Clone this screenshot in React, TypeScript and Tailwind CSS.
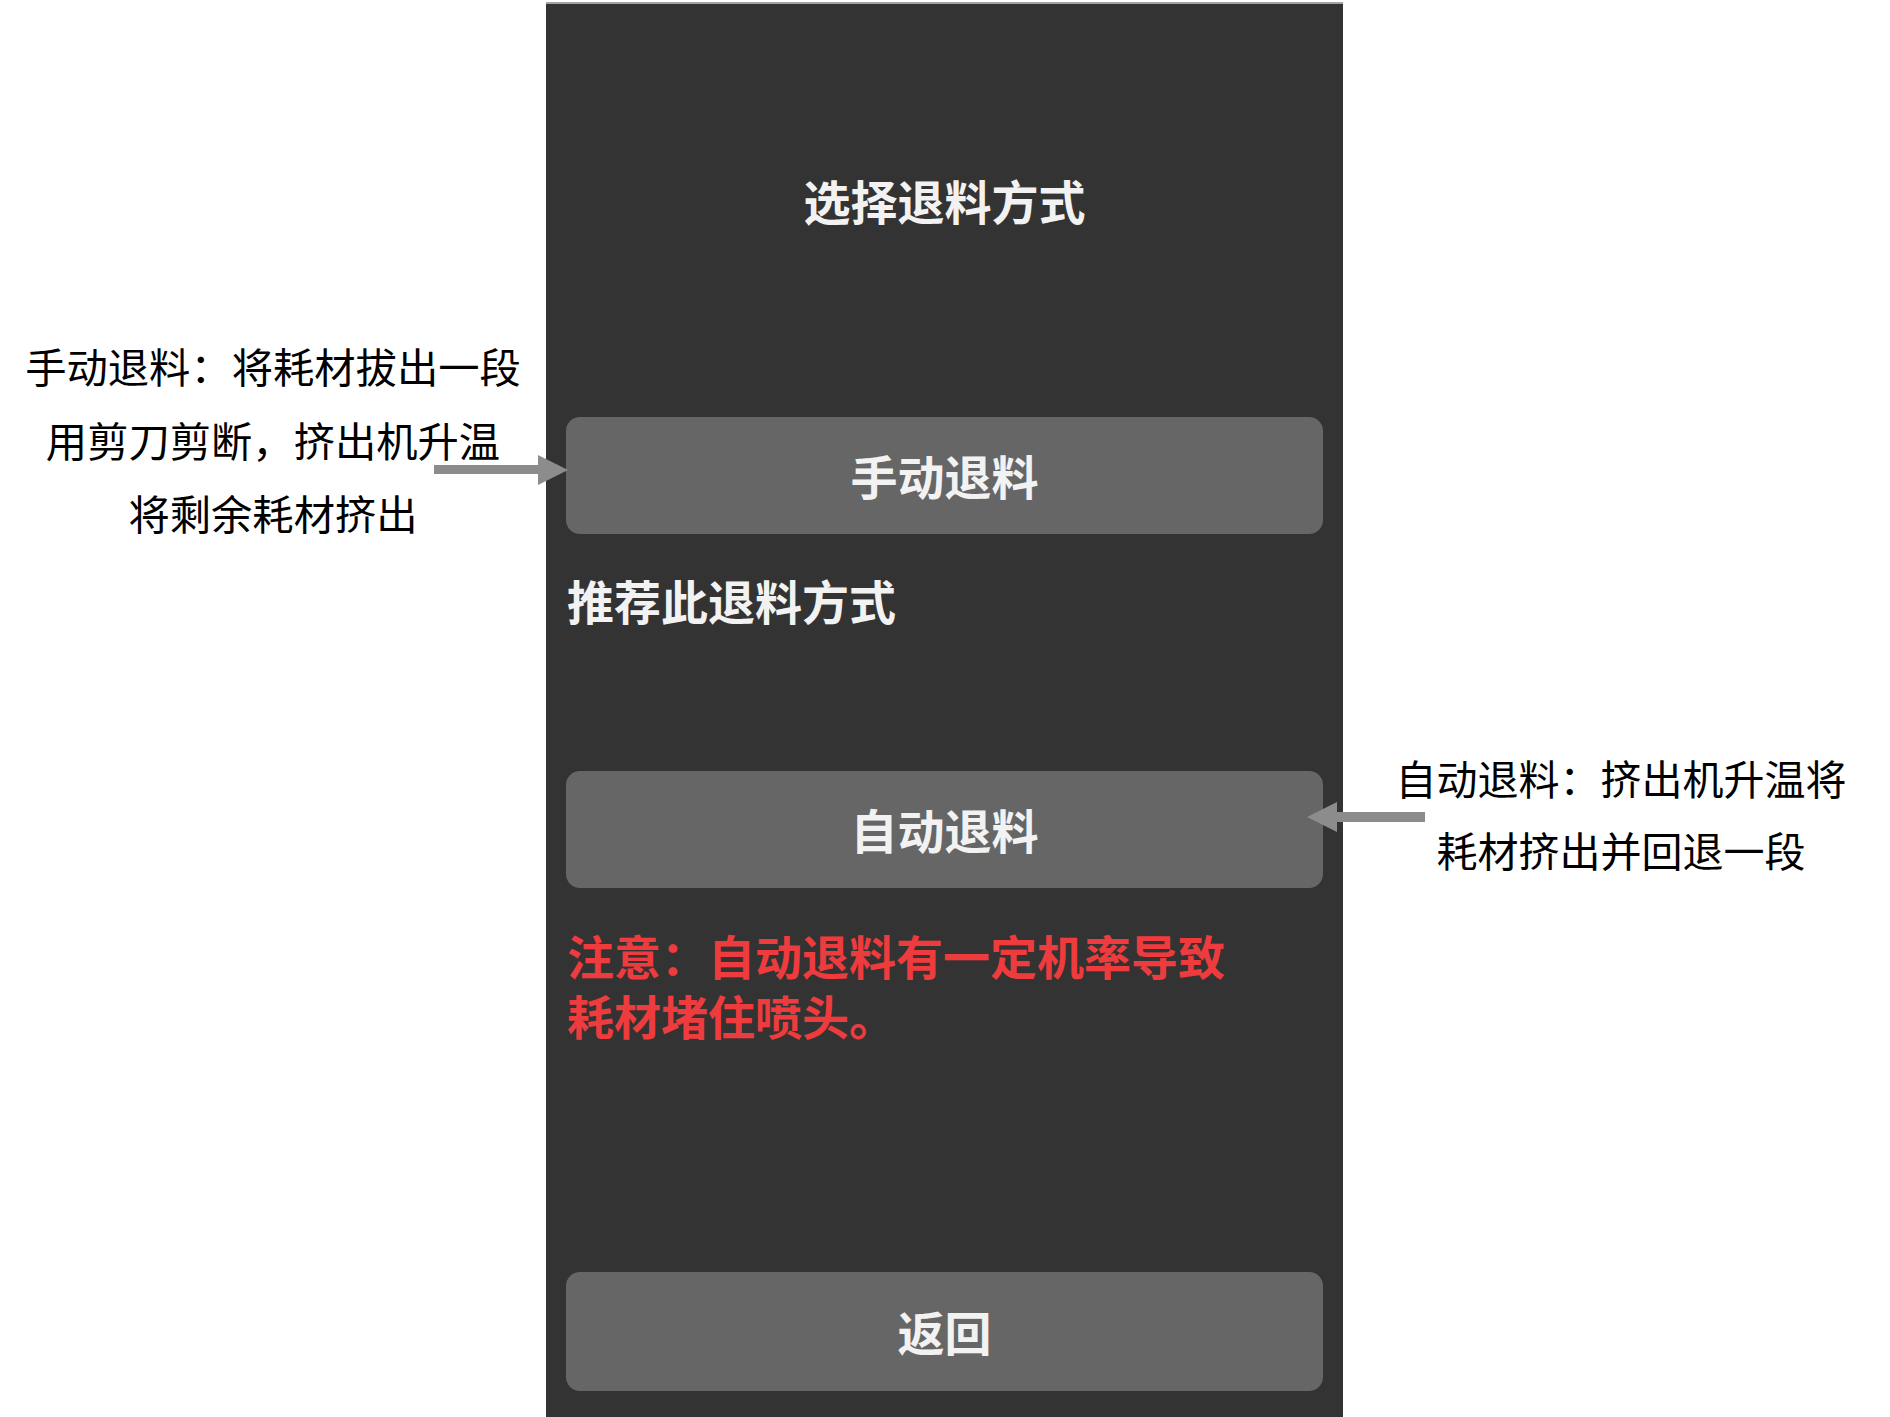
import React from 'react'

const cjk = { fontFamily: '"Noto Sans CJK SC", "Noto Sans", sans-serif' }

interface PanelButtonProps {
  label: string
  className?: string
}

const PanelButton: React.FC<PanelButtonProps> = ({ label, className = '' }) => (
  <button
    className={`w-full h-[117px] rounded-[14px] bg-[#666666] text-[47px] font-semibold text-[#f2f2f2] flex items-center justify-center ${className}`}
  >
    {label}
  </button>
)

// Grey callout arrows that sit over the panel edges
const ArrowRight: React.FC = () => (
  <svg className="absolute left-[434px] top-[455px]" width="134" height="30" viewBox="0 0 134 30">
    <rect x="0" y="10" width="105" height="9" fill="#8c8c8c" />
    <polygon points="104,0 134,15 104,30" fill="#8c8c8c" />
  </svg>
)

const ArrowLeft: React.FC = () => (
  <svg className="absolute left-[1307px] top-[802px]" width="118" height="30" viewBox="0 0 118 30">
    <polygon points="0,15 30,0 30,30" fill="#8c8c8c" />
    <rect x="29" y="10" width="89" height="10" fill="#8c8c8c" />
  </svg>
)

export default function App() {
  return (
    <div className="relative w-[1890px] h-[1417px] bg-white flex overflow-hidden" style={cjk}>
      {/* Left note */}
      <div className="w-[546px] shrink-0 pt-[329px] text-center text-[41.3px] leading-[73.5px] text-black">
        <p>手动退料：将耗材拔出一段</p>
        <p>用剪刀剪断，挤出机升温</p>
        <p>将剩余耗材挤出</p>
      </div>

      {/* Device screen */}
      <div className="w-[797px] shrink-0 mt-[2px] border-t-2 border-[#a3a3a3] bg-[#333333] px-[20px] flex flex-col">
        <h1 className="mt-[168px] text-center text-[47px] leading-[56px] font-semibold text-[#f2f2f2]">
          选择退料方式
        </h1>

        <PanelButton label="手动退料" className="mt-[189px]" />

        <p className="mt-[38px] pl-[1px] text-[47px] leading-[56px] font-semibold text-[#f2f2f2]">
          推荐此退料方式
        </p>

        <PanelButton label="自动退料" className="mt-[143px]" />

        <p className="mt-[37px] pl-[1px] text-[47px] leading-[60px] font-semibold text-[#ee3b3d]">
          注意：自动退料有一定机率导致
          <br />
          耗材堵住喷头。
        </p>

        <PanelButton label="返回" className="mt-[227px] h-[119px]" />
      </div>

      {/* Right note */}
      <div className="flex-1 pl-[9px] pt-[741px] text-center text-[41px] leading-[72px] text-black">
        <p>自动退料：挤出机升温将</p>
        <p>耗材挤出并回退一段</p>
      </div>

      <ArrowRight />
      <ArrowLeft />
    </div>
  )
}
